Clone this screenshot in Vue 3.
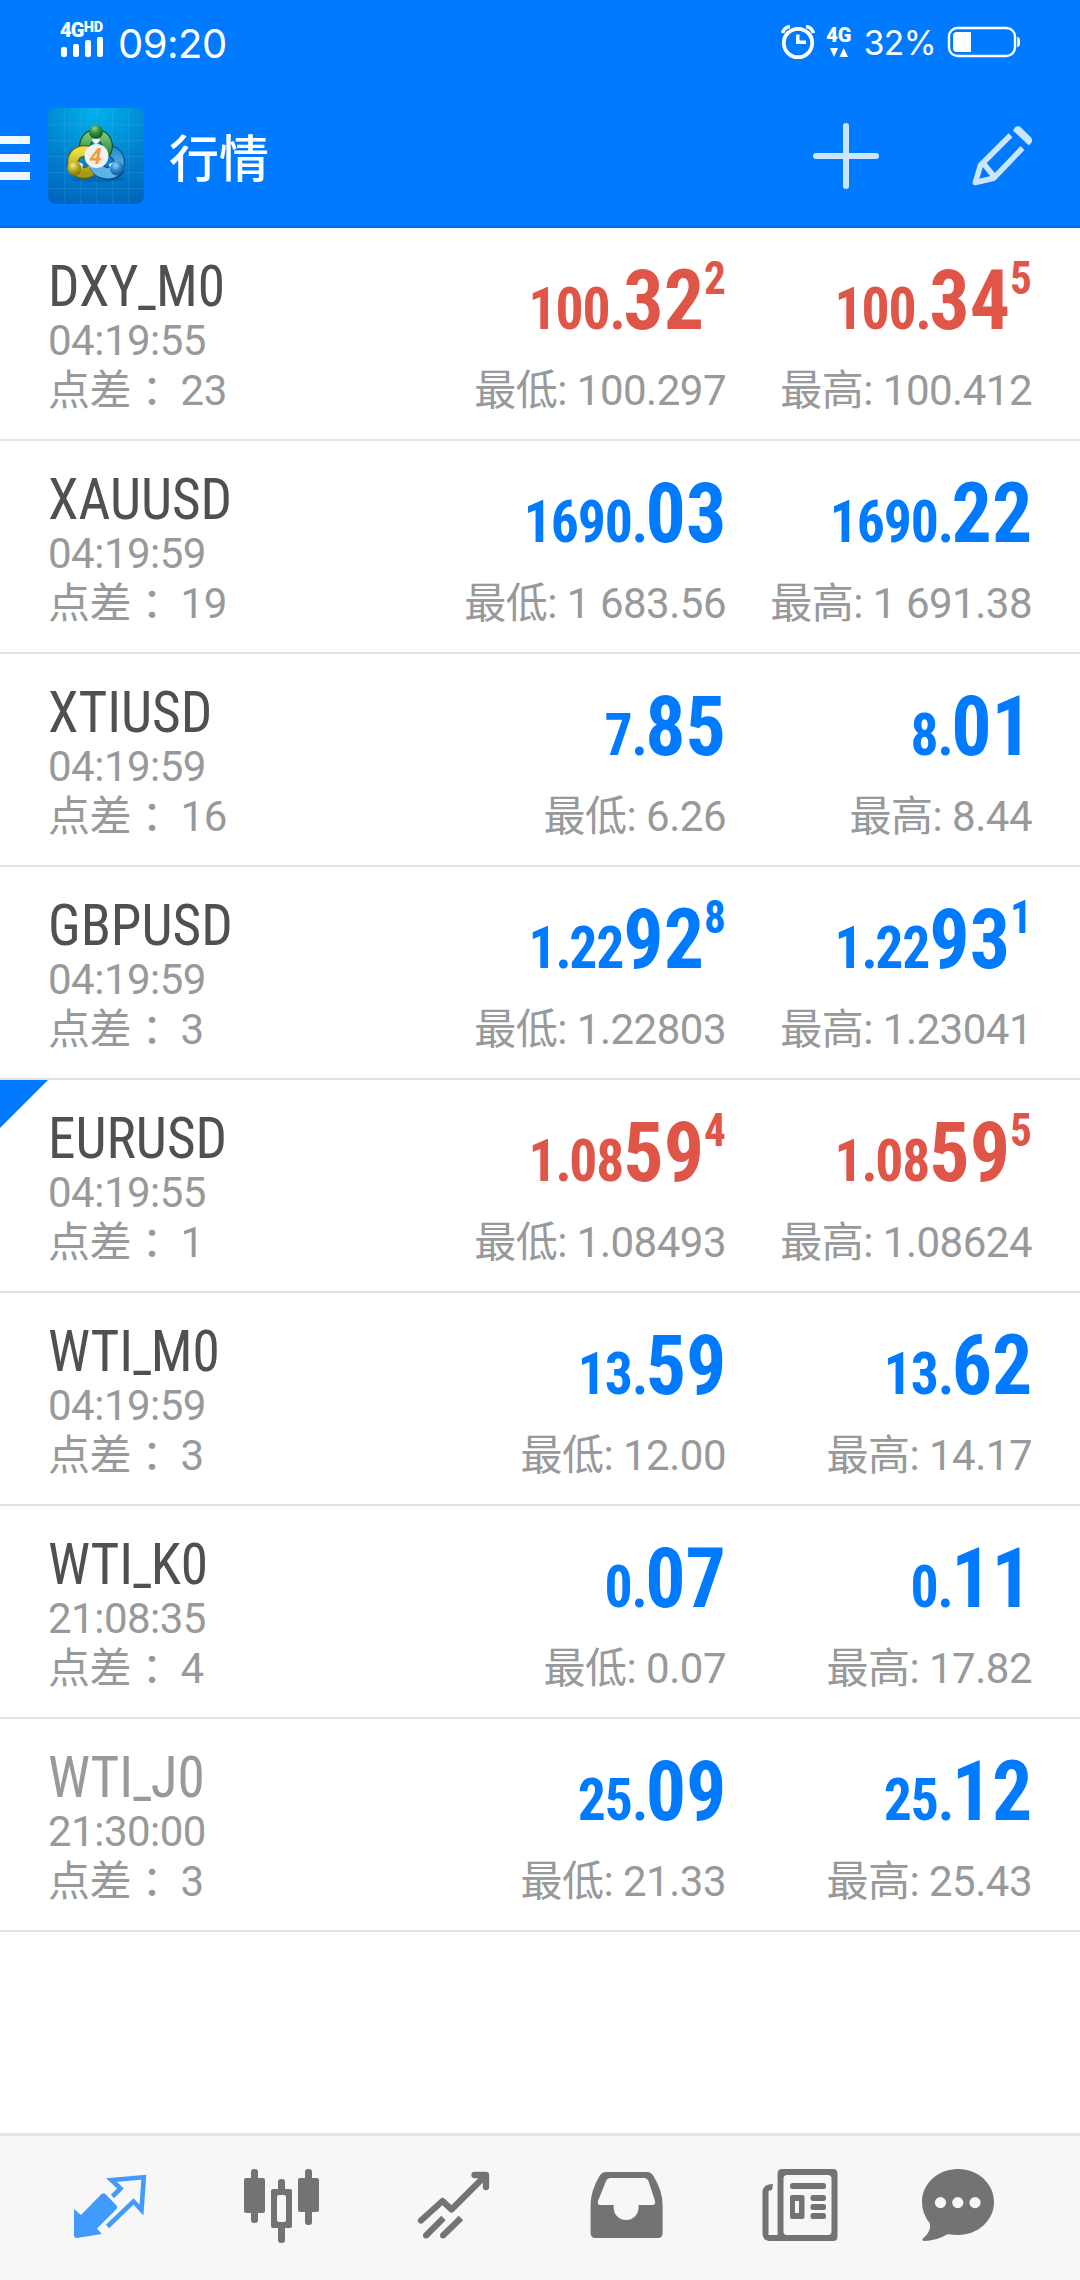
<script setup>
const quotes = [
  { name: 'DXY_M0', time: '04:19:55', spread: '23', dir: 'down', bid: ['100', '32', '2'], ask: ['100', '34', '5'], low: '100.297', high: '100.412' },
  { name: 'XAUUSD', time: '04:19:59', spread: '19', dir: 'up', bid: ['1690', '03', ''], ask: ['1690', '22', ''], low: '1 683.56', high: '1 691.38' },
  { name: 'XTIUSD', time: '04:19:59', spread: '16', dir: 'up', bid: ['7', '85', ''], ask: ['8', '01', ''], low: '6.26', high: '8.44' },
  { name: 'GBPUSD', time: '04:19:59', spread: '3', dir: 'up', bid: ['1', '92', '8', '22'], ask: ['1', '93', '1', '22'], low: '1.22803', high: '1.23041' },
  { name: 'EURUSD', time: '04:19:55', spread: '1', dir: 'down', bid: ['1', '59', '4', '08'], ask: ['1', '59', '5', '08'], low: '1.08493', high: '1.08624', marked: true },
  { name: 'WTI_M0', time: '04:19:59', spread: '3', dir: 'up', bid: ['13', '59', ''], ask: ['13', '62', ''], low: '12.00', high: '14.17' },
  { name: 'WTI_K0', time: '21:08:35', spread: '4', dir: 'up', bid: ['0', '07', ''], ask: ['0', '11', ''], low: '0.07', high: '17.82' },
  { name: 'WTI_J0', time: '21:30:00', spread: '3', dir: 'up', bid: ['25', '09', ''], ask: ['25', '12', ''], low: '21.33', high: '25.43', inactive: true },
]
</script>

<template>
  <div class="screen">
    <header class="top">
      <div class="status">
        <div class="network">
          <div class="net-label"><span class="g4">4G</span><span class="hd">HD</span></div>
          <div class="bars"><i class="b1"></i><i class="b2"></i><i class="b3"></i><i class="b4"></i></div>
        </div>
        <span class="clock">09:20</span>
        <div class="fill"></div>
        <svg class="alarm" width="36" height="36" viewBox="781 25 36 36">
          <circle cx="799" cy="43" r="14.2" fill="none" stroke="#fff" stroke-width="3.8" />
          <path d="M783.5 33 Q785.500 27 791 26.800 M814.500 33 Q812.500 27 807 26.800" fill="none" stroke="#fff" stroke-width="3.600" />
          <path d="M798.800 34.500 V42.300 H807" fill="none" stroke="#fff" stroke-width="3.400" />
        </svg>
        <div class="data">
          <span>4G</span>
          <svg width="18" height="9" viewBox="0 0 18 9"><path d="M0 0H8L4 9Z M9.500 9H18L13.700 0Z" fill="#fff" /></svg>
        </div>
        <span class="percent">32%</span>
        <svg class="battery" width="74" height="32" viewBox="947 26 74 32">
          <rect x="949" y="28" width="66" height="28" rx="8.500" fill="none" stroke="#fff" stroke-width="2.400" />
          <path d="M957 32H971V52H957Q953 52 953 48V36Q953 32 957 32Z" fill="#fff" />
          <path d="M1017.200 36.500Q1020 37.500 1020 40V44Q1020 46.500 1017.200 47.500Z" fill="#fff" />
        </svg>
      </div>
      <div class="bar">
        <div class="burger"><i></i><i></i><i></i></div>
        <svg class="logo" width="96" height="96" viewBox="0 0 96 96">
          <defs>
            <radialGradient id="bg" cx="50%" cy="0%" r="105%"><stop offset="0" stop-color="#00b4ec" /><stop offset=".55" stop-color="#0384cf" /><stop offset="1" stop-color="#0066bd" /></radialGradient>
            <linearGradient id="gr" x2="0" y2="1"><stop offset="0" stop-color="#7cc576" /><stop offset="1" stop-color="#1d7a34" /></linearGradient>
            <linearGradient id="ye" x2="0" y2="1"><stop offset="0" stop-color="#e9e04a" /><stop offset="1" stop-color="#a99a10" /></linearGradient>
            <linearGradient id="bl" x2="0" y2="1"><stop offset="0" stop-color="#2f8fd0" /><stop offset="1" stop-color="#6bbcf0" /></linearGradient>
            <radialGradient id="gb" cx="40%" cy="25%" r="75%"><stop offset="0" stop-color="#8fd08a" /><stop offset=".5" stop-color="#2c8a3c" /><stop offset="1" stop-color="#0f5a25" /></radialGradient>
            <radialGradient id="yb" cx="38%" cy="28%" r="75%"><stop offset="0" stop-color="#f4ee8a" /><stop offset=".5" stop-color="#b9a81c" /><stop offset="1" stop-color="#7d7008" /></radialGradient>
            <radialGradient id="bb" cx="40%" cy="28%" r="75%"><stop offset="0" stop-color="#8fd0f5" /><stop offset=".5" stop-color="#2f86cc" /><stop offset="1" stop-color="#0c559c" /></radialGradient>
          </defs>
          <rect width="96" height="96" rx="8" fill="url(#bg)" />
          <path d="M16.500 0V96M32.500 0V96M48.500 0V96M64.500 0V96M80.500 0V96M0 16.500H96M0 32.500H96M0 48.500H96M0 64.500H96M0 80.500H96" stroke="#6fd0ff" stroke-opacity=".13" />
          <ellipse cx="49" cy="71" rx="27" ry="3" fill="#004c94" opacity=".35" />
          <circle cx="60" cy="54" r="11" fill="none" stroke="#0a4f8c" stroke-width="12" />
          <circle cx="60" cy="54" r="11" fill="none" stroke="url(#bl)" stroke-width="9.500" />
          <circle cx="48" cy="38" r="11" fill="none" stroke="#0f5424" stroke-width="12" />
          <circle cx="48" cy="38" r="11" fill="none" stroke="url(#gr)" stroke-width="9.500" />
          <circle cx="36" cy="54" r="11" fill="none" stroke="#665f0c" stroke-width="12" />
          <circle cx="36" cy="54" r="11" fill="none" stroke="url(#ye)" stroke-width="9.500" />
          <path d="M43.500 59Q50 70 62 70Q70 69 75 62" fill="none" stroke="#0a4f8c" stroke-width="5" />
          <path d="M41 58H50Q54 64 62 64Q68 64 73 60L72 66Q66 70.500 60 70.500Q46 70 41 58Z" fill="#5db2ea" />
          <path d="M44 33L48 36.500L52 33L51 30H45ZM30 54L35 56L34 61L32 62ZM66 54L61 56L62 61L64 62Z" fill="#eef6f4" />
          <circle cx="48" cy="24" r="7" fill="url(#gb)" />
          <circle cx="26.500" cy="60.500" r="7" fill="url(#yb)" />
          <circle cx="69" cy="60.500" r="7" fill="url(#bb)" />
          <circle cx="48.500" cy="48" r="12" fill="#f1f1f2" />
          <text x="47.500" y="55.800" text-anchor="middle" class="four">4</text>
        </svg>
        <h1>行情</h1>
        <div class="fill"></div>
        <svg class="plus" width="66" height="66" viewBox="0 0 66 66"><path d="M33 3V63M3 33H63" stroke="#cce5ff" stroke-width="6" stroke-linecap="round" /></svg>
        <svg class="pencil" width="62" height="62" viewBox="972 125 62 62">
          <path d="M1010.500 135.300L980.500 165.300L975.300 182.500L993.500 178.300L1022.500 148M984 164L994.500 177" fill="none" stroke="#cce5ff" stroke-width="5.500" stroke-linejoin="round" />
          <path d="M1013 130.500L1015 127.500Q1018 124.500 1021 127.500L1031 137.500Q1033 140 1031.500 142.500L1028.800 145.500Z" fill="#cce5ff" />
        </svg>
      </div>
    </header>

    <main>
      <section v-for="q in quotes" :key="q.name" class="row" :class="[q.dir, { marked: q.marked, inactive: q.inactive }]">
        <div class="info">
          <div class="name"><template v-for="(part, i) in q.name.split('_')" :key="i"><span v-if="i" class="under">_</span>{{ part }}</template></div>
          <div class="time">{{ q.time }}</div>
          <div class="spread"><span class="lbl">点差</span><span class="colon">：</span><span>{{ q.spread }}</span></div>
        </div>
        <div v-for="side in ['bid', 'ask']" :key="side" class="quote">
          <div class="price"><span class="sm">{{ q[side][0] }}<span class="point">.</span>{{ q[side][3] }}</span><span class="lg">{{ q[side][1] }}</span><span v-if="q[side][2]" class="sup">{{ q[side][2] }}</span></div>
          <div class="extreme">{{ side === 'bid' ? '最低: ' + q.low : '最高: ' + q.high }}</div>
        </div>
      </section>
    </main>

    <nav>
      <svg viewBox="24 2136 172 144">
        <path d="M74 2209L81 2215L101.500 2194Q103.500 2192.500 105.500 2194L116.500 2205.500Q118 2207.500 116.500 2209L97 2228.500L101.800 2234L77 2238Q74 2238 74 2235.500Z" />
        <path d="M112.500 2196.500L120.500 2188.500L111.500 2180L143.800 2177.200L141.500 2210L133.500 2201.500L107.500 2226.500" fill="none" stroke="#419bff" stroke-width="4.600" />
      </svg>
      <svg viewBox="196 2136 172 144">
        <rect x="251" y="2169" width="7" height="54" rx="3" /><rect x="244" y="2178" width="21" height="35" rx="2" />
        <rect x="278" y="2179" width="7" height="64" rx="3" />
        <rect x="271" y="2189" width="21" height="39" rx="2" />
        <rect x="277" y="2195" width="9" height="27" rx="2" fill="#f7f7f7" />
        <rect x="305" y="2169" width="7" height="56" rx="3" /><rect x="298" y="2178" width="21" height="34" rx="2" />
      </svg>
      <svg viewBox="368 2136 172 144" class="line">
        <path d="M421 2220.500L442.500 2201L451.500 2209.500L485.500 2175.500M474.500 2175H486V2187" stroke-linecap="round" />
        <path d="M443.500 2218L426 2235.500M461 2218L443 2235.500" />
        <circle cx="426" cy="2235.500" r="3" class="dot" /><circle cx="443" cy="2235.500" r="3" class="dot" />
      </svg>
      <svg viewBox="540 2136 172 144">
        <path fill-rule="evenodd" d="M606 2172H647Q651 2172 653.500 2176Q662.600 2191 662.600 2205V2233Q662.600 2238 658 2238H595.500Q590.600 2238 590.600 2233V2205Q590.600 2191 599.500 2176Q602 2172 606 2172ZM610 2178Q607.500 2178 606 2181L598 2201Q597 2205 600.500 2205H613.700V2208A12.400 12 0 0 0 638.500 2208V2205H652Q656 2205 655 2201L648.500 2181Q647 2178 644.500 2178Z" />
      </svg>
      <svg viewBox="712 2136 172 144">
        <path fill-rule="evenodd" d="M782 2169H833Q837.500 2169 837.500 2173.500V2236.500Q837.500 2241 833 2241H769Q762.500 2240 762.500 2233.500V2191Q763.500 2184 773 2184L772 2190Q768.500 2190 768.500 2192V2235H777.600V2173.500Q777.600 2169 782 2169ZM787 2175Q783.500 2175 783.500 2178.500V2231.500Q783.500 2235 787 2235H828Q831.500 2235 831.500 2231.500V2178.500Q831.500 2175 828 2175Z" />
        <rect x="790" y="2183" width="36" height="6" rx="2.500" />
        <path fill-rule="evenodd" d="M792 2195H802.500Q804.500 2195 804.500 2197V2217Q804.500 2219 802.500 2219H792Q790 2219 790 2217V2197Q790 2195 792 2195ZM795 2201V2213H799V2201Z" />
        <rect x="810.500" y="2195" width="15.500" height="6" rx="2.500" /><rect x="810.500" y="2204" width="15.500" height="6" rx="2.500" /><rect x="810.500" y="2213" width="15.500" height="6" rx="2.500" />
      </svg>
      <svg viewBox="884 2136 172 144">
        <path d="M958 2169C978 2169 994 2183.500 994 2202S978 2235 958 2235Q952.500 2235 948 2234Q936 2241 924 2241Q921 2240 923.500 2238Q931 2232 930 2223.500Q922 2214 922 2202C922 2183.500 938 2169 958 2169Z" />
        <g fill="#f7f7f7"><circle cx="940.500" cy="2202.600" r="5.600" /><circle cx="957.800" cy="2202.600" r="5.600" /><circle cx="975" cy="2202.600" r="5.600" /></g>
      </svg>
    </nav>
  </div>
</template>

<style>
body { margin: 0; background: #fff; }
</style>

<style scoped>
.screen { width: 1080px; height: 2280px; display: flex; flex-direction: column; background: #fff; overflow: hidden; font-family: Roboto, "Noto Sans CJK SC", sans-serif; }
.fill { flex: 1; }
.top { height: 228px; box-sizing: border-box; background: #007aff; border-bottom: 3px solid #0070ea; color: #fff; }
.status { height: 84px; display: flex; align-items: center; padding: 0 59px 0 60px; box-sizing: border-box; }
.network { width: 46px; height: 35px; margin-top: -5px; display: flex; flex-direction: column; justify-content: space-between; }
.net-label { display: flex; align-items: flex-start; height: 15px; font-family: Roboto, sans-serif; font-weight: 900; }
.g4 { font-size: 20px; line-height: 16px; letter-spacing: -0.8px; }
.hd { font-size: 14.5px; line-height: 11px; }
.bars { display: flex; align-items: flex-end; gap: 6px; padding-left: 1px; }
.bars i { width: 6px; border-radius: 2px; background: #fff; }
.b1 { height: 10px; } .b2 { height: 13px; } .b3 { height: 17px; } .b4 { height: 20px; }
.clock { margin: 3px 0 0 12px; font-family: Inter, sans-serif; font-size: 40px; line-height: 48px; letter-spacing: -0.5px; }
.alarm { margin-top: 2px; }
.data { display: flex; flex-direction: column; align-items: center; width: 26px; margin: 0 12px 0 10px; font: 900 20px/15px Roboto, sans-serif; }
.data svg { margin-top: 5px; }
.percent { font-family: Inter, sans-serif; font-size: 33.5px; letter-spacing: -0.6px; line-height: 40px; margin: 2px 11px 0 0; }
.bar { height: 144px; display: flex; align-items: center; }
.burger { width: 30px; display: flex; flex-direction: column; gap: 10px; margin-right: 18px; margin-top: 4px; }
.burger i { height: 8px; background: #f0f7ff; }
.four { font: italic 700 22px Roboto, sans-serif; fill: #f39a3c; }
h1 { margin: -2px 0 0 25px; font: 500 50px/60px "Noto Sans CJK SC", sans-serif; }
.plus { margin-right: 93px; }
.pencil { margin-right: 46px; }

.row { height: 213px; box-sizing: border-box; border-bottom: 2px solid #e3e3e4; display: flex; padding: 0 48px; position: relative; }
.marked::before { content: ""; position: absolute; left: 0; top: 0; width: 48px; height: 48px; background: #007aff; clip-path: polygon(0 0, 100% 0, 0 100%); }
.info { flex: 1; padding-top: 24px; color: #97999b; font-size: 42px; }
.name { font-family: "Roboto Condensed", Roboto, sans-serif; font-stretch: 75%; font-size: 58px; line-height: 68px; color: #505050; transform: scaleX(0.953); transform-origin: left; }
.under { display: inline-block; transform: scaleX(0.82); margin: 0 -2.5px; }
.inactive .name { color: #97999b; }
.time { line-height: 50px; margin-top: -4px; letter-spacing: -0.5px; }
.spread { height: 50px; line-height: 50px; display: flex; letter-spacing: -0.5px; }
.colon { margin: -2px 8px 0 0; font-family: "Noto Sans CJK TC", sans-serif; }
.quote { width: 306px; display: flex; flex-direction: column; align-items: flex-end; color: #97999b; }
.price { height: 76px; margin-top: 29px; display: flex; align-items: baseline; font-family: "Roboto Condensed", Roboto, sans-serif; font-stretch: 75%; font-weight: 700; line-height: 88px; transform: scaleX(0.95); transform-origin: right; }
.up .price { color: #007aff; }
.down .price { color: #df5649; }
.sm { font-size: 58.5px; letter-spacing: -1.1px; }
.point { letter-spacing: -2.5px; }
.lg { font-size: 84px; }
.sup { font-size: 45.5px; align-self: flex-start; line-height: 44px; }
.extreme { font-size: 42px; line-height: 50px; margin-top: 33px; white-space: pre; letter-spacing: -0.5px; }

nav { height: 147px; margin-top: auto; box-sizing: border-box; border-top: 3px solid #e3e3e3; background: #f7f7f7; display: flex; padding-left: 24px; }
nav svg { width: 172px; height: 144px; flex: none; fill: #737373; }
nav svg:first-child { fill: #419bff; }
nav .line { fill: none; stroke: #737373; stroke-width: 6.3; stroke-linejoin: round; }
nav .dot { fill: #737373; stroke: none; }
</style>
